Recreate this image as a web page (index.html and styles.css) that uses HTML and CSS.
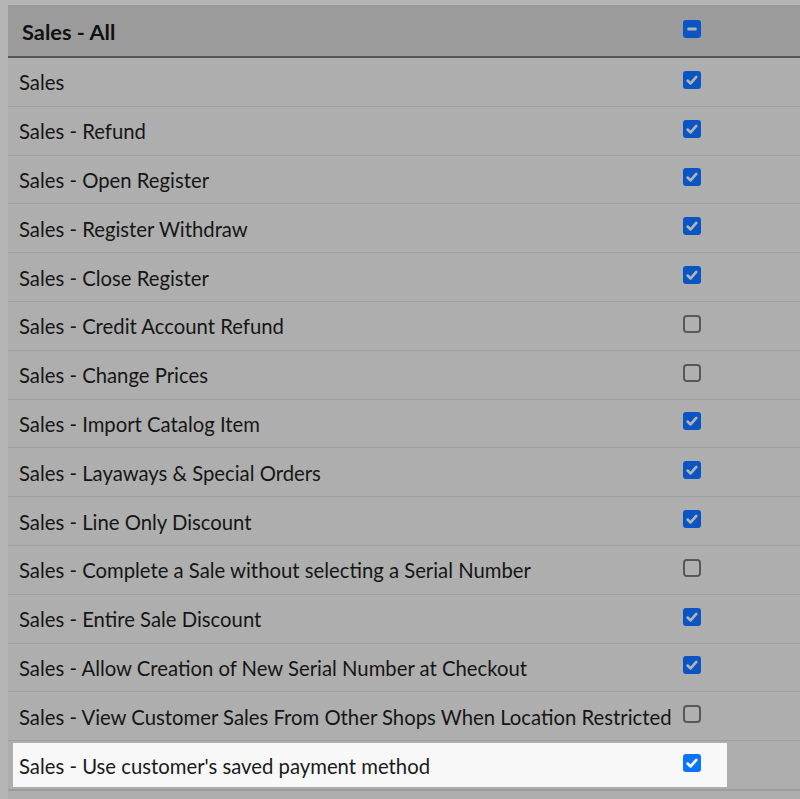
FILE: index.html
```html
<!DOCTYPE html>
<html>
<head>
<meta charset="utf-8">
<link rel="stylesheet" href="styles.css">
</head>
<body>
<div class="table">
  <div class="head">
    <div class="head-inner">
      <div class="head-label">Sales - All</div>
      <div class="cell-cb head-cb"><span class="cb on"><svg viewBox="0 0 18 18" width="18" height="18"><rect x="4.3" y="7.5" width="9.4" height="3" rx="1.3" fill="#b3b3b3"/></svg></span></div>
    </div>
  </div>
  <div class="row"><div class="inner"><div class="label">Sales</div><div class="cell-cb"><span class="cb on"><svg viewBox="0 0 18 18" width="18" height="18"><path d="M4.6 9.6 L7.6 12.4 L13.3 5.9" fill="none" stroke="#b3b3b3" stroke-width="2.7" stroke-linecap="round" stroke-linejoin="round"/></svg></span></div></div></div>
  <div class="row"><div class="inner"><div class="label">Sales - Refund</div><div class="cell-cb"><span class="cb on"><svg viewBox="0 0 18 18" width="18" height="18"><path d="M4.6 9.6 L7.6 12.4 L13.3 5.9" fill="none" stroke="#b3b3b3" stroke-width="2.7" stroke-linecap="round" stroke-linejoin="round"/></svg></span></div></div></div>
  <div class="row"><div class="inner"><div class="label">Sales - Open Register</div><div class="cell-cb"><span class="cb on"><svg viewBox="0 0 18 18" width="18" height="18"><path d="M4.6 9.6 L7.6 12.4 L13.3 5.9" fill="none" stroke="#b3b3b3" stroke-width="2.7" stroke-linecap="round" stroke-linejoin="round"/></svg></span></div></div></div>
  <div class="row"><div class="inner"><div class="label">Sales - Register Withdraw</div><div class="cell-cb"><span class="cb on"><svg viewBox="0 0 18 18" width="18" height="18"><path d="M4.6 9.6 L7.6 12.4 L13.3 5.9" fill="none" stroke="#b3b3b3" stroke-width="2.7" stroke-linecap="round" stroke-linejoin="round"/></svg></span></div></div></div>
  <div class="row"><div class="inner"><div class="label">Sales - Close Register</div><div class="cell-cb"><span class="cb on"><svg viewBox="0 0 18 18" width="18" height="18"><path d="M4.6 9.6 L7.6 12.4 L13.3 5.9" fill="none" stroke="#b3b3b3" stroke-width="2.7" stroke-linecap="round" stroke-linejoin="round"/></svg></span></div></div></div>
  <div class="row"><div class="inner"><div class="label">Sales - Credit Account Refund</div><div class="cell-cb"><span class="cb off"></span></div></div></div>
  <div class="row"><div class="inner"><div class="label">Sales - Change Prices</div><div class="cell-cb"><span class="cb off"></span></div></div></div>
  <div class="row"><div class="inner"><div class="label">Sales - Import Catalog Item</div><div class="cell-cb"><span class="cb on"><svg viewBox="0 0 18 18" width="18" height="18"><path d="M4.6 9.6 L7.6 12.4 L13.3 5.9" fill="none" stroke="#b3b3b3" stroke-width="2.7" stroke-linecap="round" stroke-linejoin="round"/></svg></span></div></div></div>
  <div class="row"><div class="inner"><div class="label">Sales - Layaways &amp; Special Orders</div><div class="cell-cb"><span class="cb on"><svg viewBox="0 0 18 18" width="18" height="18"><path d="M4.6 9.6 L7.6 12.4 L13.3 5.9" fill="none" stroke="#b3b3b3" stroke-width="2.7" stroke-linecap="round" stroke-linejoin="round"/></svg></span></div></div></div>
  <div class="row"><div class="inner"><div class="label">Sales - Line Only Discount</div><div class="cell-cb"><span class="cb on"><svg viewBox="0 0 18 18" width="18" height="18"><path d="M4.6 9.6 L7.6 12.4 L13.3 5.9" fill="none" stroke="#b3b3b3" stroke-width="2.7" stroke-linecap="round" stroke-linejoin="round"/></svg></span></div></div></div>
  <div class="row"><div class="inner"><div class="label">Sales - Complete a Sale without selecting a Serial Number</div><div class="cell-cb"><span class="cb off"></span></div></div></div>
  <div class="row"><div class="inner"><div class="label">Sales - Entire Sale Discount</div><div class="cell-cb"><span class="cb on"><svg viewBox="0 0 18 18" width="18" height="18"><path d="M4.6 9.6 L7.6 12.4 L13.3 5.9" fill="none" stroke="#b3b3b3" stroke-width="2.7" stroke-linecap="round" stroke-linejoin="round"/></svg></span></div></div></div>
  <div class="row"><div class="inner"><div class="label">Sales - Allow Creation of New Serial Number at Checkout</div><div class="cell-cb"><span class="cb on"><svg viewBox="0 0 18 18" width="18" height="18"><path d="M4.6 9.6 L7.6 12.4 L13.3 5.9" fill="none" stroke="#b3b3b3" stroke-width="2.7" stroke-linecap="round" stroke-linejoin="round"/></svg></span></div></div></div>
  <div class="row"><div class="inner"><div class="label">Sales - View Customer Sales From Other Shops When Location Restricted</div><div class="cell-cb"><span class="cb off"></span></div></div></div>
  <div class="row last"><div class="inner spot"><div class="label">Sales - Use customer's saved payment method</div><div class="cell-cb"><span class="cb on bright"><svg viewBox="0 0 18 18" width="18" height="18"><path d="M4.6 9.6 L7.6 12.4 L13.3 5.9" fill="none" stroke="#ffffff" stroke-width="2.7" stroke-linecap="round" stroke-linejoin="round"/></svg></span></div></div></div>
  <div class="foot"></div>
</div>
</body>
</html>
```

FILE: styles.css
```css
html, body {
  margin: 0;
  padding: 0;
}
body {
  background: #b4b4b4;
  font-family: Lato, "Open Sans", sans-serif;
  color: #161616;
  width: 800px;
  height: 799px;
  overflow: hidden;
}
.table {
  margin: 5px 0 0 8px;
  background: #aeaeae;
}
.head {
  background: #9b9b9b;
  border-bottom: 2.5px solid #555555;
  height: 51px;
}
.head-inner {
  display: grid;
  grid-template-columns: 667px 52px;
  height: 100%;
  align-items: center;
}
.head-label {
  font-weight: 700;
  font-size: 21.8px;
  padding-left: 14px;
  padding-top: 2px;
  color: #111;
}
.cell-cb.head-cb {
  margin-bottom: 3px;
}
.row {
  height: 47.8px;
  border-bottom: 1px solid #9e9e9e;
  display: flex;
}
.inner {
  display: grid;
  grid-template-columns: 662px 52px;
  margin-left: 5px;
  width: 714px;
  align-items: center;
}
.label {
  font-size: 20.3px;
  padding-left: 6px;
  padding-top: 1px;
  white-space: nowrap;
}
.cell-cb {
  padding-left: 8px;
  margin-bottom: 4px;
  display: flex;
  align-items: center;
}
.cb {
  width: 18px;
  height: 18px;
  box-sizing: border-box;
  border-radius: 3px;
  display: block;
}
.cb svg {
  display: block;
}
.cb.on {
  background: #0a54c4;
}
.cb.off {
  border: 2px solid #585858;
  border-radius: 4px;
  background: #b0b0b0;
}
.row.last {
  border-bottom: 2px solid #9c9c9c;
}
.spot {
  background: #f8f8f8;
  margin-top: 1.7px;
  margin-bottom: 1.5px;
  color: #1a1a1a;
}
.cb.bright {
  background: #0b74ff;
}
.foot {
  height: 12px;
  background: #aeaeae;
}
```
